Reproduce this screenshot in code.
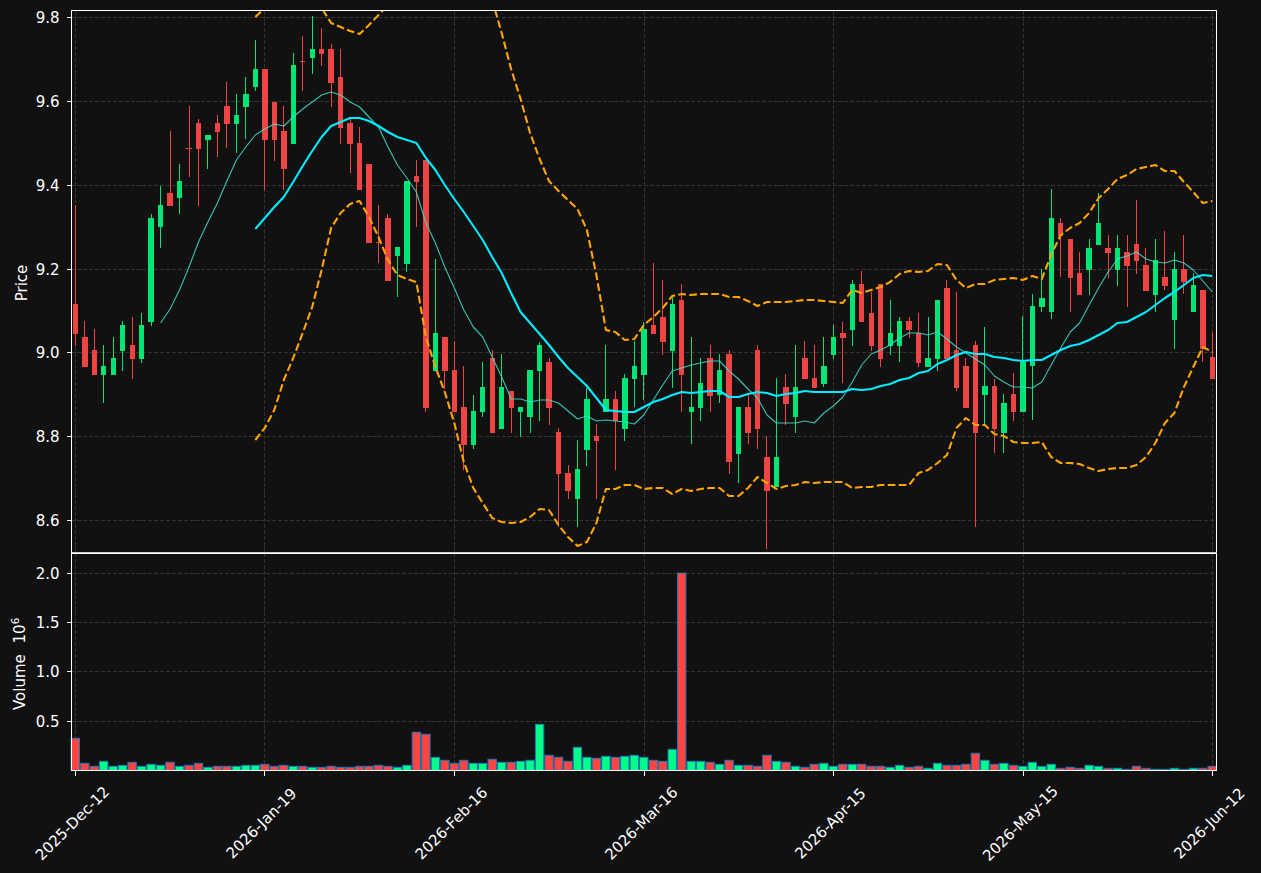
const LEFT = 71.5;
const RIGHT = 1216.5;
const TOP = 10.5;
const SPLIT = 553;
const BOTTOM = 770.5;

// candle spacing on the x axis, every 20th bar gets a date tick
const xAt = (i: number) => 75.3 + 9.475 * i;

// colour, wick top, body top, body bottom, wick bottom (all in px)
type Candle = ["r" | "g", number, number, number, number];

const candles: Candle[] = [
  ["r", 205, 304, 334, 346], ["r", 321, 337, 367, 367], ["r", 329, 350, 375, 375], ["g", 345, 366, 375, 403],
  ["g", 337, 358, 375, 375], ["g", 321, 325, 351, 371], ["r", 317, 345, 359, 379], ["g", 313, 325, 359, 363],
  ["g", 214, 218, 322, 326], ["g", 186, 205, 227, 248], ["r", 131, 193, 206, 206], ["g", 164, 181, 198, 214],
  ["r", 106, 148, 149, 177], ["r", 119, 123, 149, 206], ["g", 135, 135, 140, 169], ["r", 115, 123, 132, 157],
  ["r", 82, 106, 124, 148], ["g", 94, 115, 124, 153], ["g", 77, 94, 107, 139], ["g", 40, 69, 87, 91],
  ["r", 69, 69, 140, 190], ["r", 102, 102, 140, 161], ["r", 106, 131, 169, 190], ["g", 53, 65, 144, 144],
  ["r", 36, 61, 62, 91], ["g", 16, 49, 58, 74], ["r", 28, 49, 54, 66], ["r", 44, 49, 83, 107],
  ["r", 49, 77, 128, 144], ["r", 119, 123, 144, 173], ["r", 127, 143, 190, 190], ["r", 164, 164, 243, 243],
  ["r", 205, 242, 243, 263], ["r", 214, 218, 281, 281], ["g", 247, 247, 256, 297], ["g", 181, 181, 264, 272],
  ["r", 160, 176, 182, 227], ["r", 160, 160, 408, 412], ["g", 259, 333, 371, 371], ["r", 337, 337, 371, 389],
  ["r", 341, 370, 412, 412], ["r", 366, 407, 445, 470], ["g", 395, 411, 445, 449], ["g", 362, 387, 412, 417],
  ["r", 350, 358, 433, 433], ["g", 354, 387, 429, 429], ["r", 391, 391, 408, 433], ["g", 407, 407, 412, 437],
  ["g", 370, 370, 417, 433], ["g", 342, 345, 371, 421], ["r", 358, 362, 408, 425], ["r", 428, 432, 474, 527],
  ["r", 465, 473, 491, 499], ["g", 440, 469, 499, 527], ["g", 388, 399, 450, 466], ["r", 424, 436, 441, 499],
  ["g", 345, 399, 412, 412], ["r", 391, 399, 421, 470], ["g", 374, 378, 429, 441], ["g", 341, 366, 379, 407],
  ["g", 322, 329, 375, 400], ["r", 263, 325, 334, 334], ["r", 280, 317, 342, 355], ["g", 297, 304, 351, 388],
  ["r", 284, 300, 375, 412], ["g", 337, 407, 412, 444], ["g", 358, 383, 408, 421], ["r", 345, 358, 396, 412],
  ["g", 354, 370, 395, 403], ["r", 350, 354, 462, 474], ["g", 407, 407, 454, 483], ["r", 395, 407, 433, 444],
  ["r", 345, 350, 429, 449], ["r", 436, 457, 491, 549], ["g", 378, 457, 487, 487], ["r", 374, 387, 404, 425],
  ["g", 345, 387, 417, 433], ["r", 341, 358, 379, 379], ["r", 345, 378, 388, 388], ["g", 337, 366, 384, 387],
  ["g", 325, 337, 355, 359], ["r", 322, 333, 338, 383], ["g", 280, 284, 330, 346], ["r", 271, 284, 322, 322],
  ["r", 292, 313, 346, 351], ["r", 284, 284, 359, 367], ["g", 300, 333, 346, 355], ["g", 317, 321, 346, 362],
  ["r", 317, 321, 330, 338], ["r", 313, 333, 363, 367], ["g", 317, 358, 367, 367], ["g", 300, 300, 359, 371],
  ["r", 280, 288, 359, 359], ["r", 292, 350, 388, 391], ["r", 358, 366, 408, 408], ["r", 341, 345, 433, 527],
  ["g", 327, 386, 395, 425], ["r", 379, 386, 429, 453], ["g", 394, 403, 433, 453], ["r", 373, 394, 412, 421],
  ["g", 316, 362, 412, 412], ["g", 294, 306, 366, 420], ["g", 269, 298, 307, 312], ["g", 189, 218, 312, 319],
  ["r", 218, 223, 236, 277], ["r", 239, 239, 278, 312], ["r", 252, 273, 295, 295], ["g", 239, 248, 270, 295],
  ["g", 193, 223, 245, 245], ["r", 235, 248, 253, 278], ["g", 235, 248, 270, 286], ["r", 235, 252, 266, 307],
  ["r", 200, 244, 261, 274], ["r", 248, 265, 291, 291], ["g", 239, 260, 295, 312], ["r", 231, 277, 286, 290],
  ["g", 252, 269, 320, 349], ["r", 235, 269, 282, 294], ["g", 273, 285, 312, 312], ["r", 290, 290, 349, 362],
  ["r", 332, 357, 379, 379],
];

// top of each volume bar in px
const volumeTops = [
  738.3, 763.3, 766.3, 761.3, 766.3, 765.3, 762.3, 766.3, 764.3, 765.3, 762.3, 766.3, 765.3, 763.3, 767.3, 766.3,
  766.3, 766.3, 765.3, 765.3, 764.3, 766.3, 765.3, 766.3, 766.3, 767.3, 767.3, 766.3, 767.3, 767.3, 766.3, 766.3,
  765.3, 766.3, 767.3, 765.3, 732.3, 734.3, 757.3, 760.3, 763.3, 760.3, 763.3, 763.3, 759.3, 762.3, 762.3, 761.3,
  760.3, 724.3, 755.3, 757.3, 761.3, 747.3, 757.3, 758.3, 756.3, 757.3, 756.3, 755.3, 757.3, 760.3, 761.3, 749.3,
  573, 761.3, 761.3, 762.3, 764.3, 760.3, 765.3, 765.3, 766.3, 755.3, 761.3, 762.3, 766.3, 767.3, 764.3, 763.3,
  766.3, 764.3, 764.3, 764.3, 766.3, 766.3, 767.3, 765.3, 767.3, 766.3, 768.3, 763.3, 765.3, 765.3, 764.3, 753.3,
  760.3, 764.3, 763.3, 765.3, 766.3, 762.3, 766.3, 764.3, 768.3, 767.3, 768.3, 765.3, 766.3, 768.3, 768.3, 769.3,
  766.3, 768.3, 769.3, 769.3, 768.3, 769.3, 768.3, 768.3, 766.3,
];

// thin moving average, starts at bar 9
const maFast = [
  323, 309, 290, 267, 242, 222, 203, 181, 160, 147, 135, 129, 124, 126, 117, 109, 102, 95, 92, 95, 102, 107, 117, 127,
  147, 165, 178, 192, 223, 243, 267, 288, 310, 327, 337, 357, 377, 399, 399, 402, 400, 400, 403, 411, 419, 416, 421,
  420, 421, 422, 424, 415, 400, 385, 371, 368, 365, 363, 361, 361, 371, 379, 389, 398, 415, 423, 423, 423, 421, 423,
  413, 406, 397, 382, 365, 354, 350, 345, 338, 333, 333, 335, 332, 339, 347, 353, 359, 365, 376, 382, 387, 387, 388,
  382, 365, 348, 332, 323, 305, 288, 272, 259, 256, 252, 259, 262, 263, 260, 263, 270, 281, 292,
];

// the rest start at bar 19
const maSlow = [
  229, 218, 207, 197, 182, 166, 151, 137, 126, 122, 118, 118, 121, 126, 132, 137, 140, 143, 158, 170, 185, 199, 212,
  226, 240, 257, 273, 293, 312, 323, 334, 345, 357, 368, 377, 386, 398, 410, 411, 412, 412, 407, 402, 399, 395, 392,
  393, 392, 391, 391, 397, 397, 394, 392, 393, 396, 394, 393, 391, 392, 392, 392, 392, 389, 390, 389, 386, 384, 380,
  378, 373, 371, 364, 360, 355, 352, 354, 354, 357, 358, 360, 361, 360, 360, 355, 350, 346, 344, 340, 335, 330, 323,
  322, 317, 312, 305, 298, 292, 285, 278, 275, 276,
];

const bandUpper = [
  17, 8, 6, 10, 3, -8, -6, 8, 23, 27, 31, 34, 25, 15, 5, -10, -25, -40, -50, -60, -60, -50, -40, -25, -12, 0, 33, 69,
  99, 133, 159, 181, 191, 200, 209, 230, 275, 330, 332, 340, 339, 325, 317, 308, 296, 294, 295, 294, 294, 294, 297,
  297, 301, 306, 302, 302, 302, 301, 300, 300, 301, 302, 303, 290, 293, 290, 287, 282, 274, 271, 272, 271, 264, 265,
  280, 288, 284, 284, 280, 279, 278, 280, 276, 279, 255, 235, 228, 223, 213, 198, 189, 179, 175, 169, 167, 165, 171,
  171, 182, 192, 203, 201,
];

const bandLower = [
  440, 428, 410, 380, 358, 333, 307, 270, 228, 213, 204, 201, 217, 237, 260, 275, 279, 282, 337, 367, 392, 423, 462,
  488, 503, 518, 522, 523, 522, 517, 509, 510, 525, 537, 546, 542, 523, 489, 489, 485, 485, 489, 488, 488, 494, 489,
  491, 489, 488, 488, 496, 496, 488, 477, 483, 489, 486, 485, 482, 483, 482, 482, 482, 488, 487, 487, 485, 485, 485,
  485, 473, 470, 463, 455, 428, 418, 425, 425, 434, 436, 442, 443, 443, 442, 457, 463, 463, 464, 468, 471, 469, 468,
  468, 465, 457, 443, 423, 413, 387, 367, 347, 352,
];

const priceTicks = [
  ["9.8", 17.5], ["9.6", 101.5], ["9.4", 185.5], ["9.2", 269.5], ["9.0", 352.5], ["8.8", 436.5], ["8.6", 520.5],
] as const;
const volumeTicks = [
  ["2.0", 573.5], ["1.5", 622.5], ["1.0", 671.5], ["0.5", 721.5],
] as const;
const dateTicks = [
  ["2025-Dec-12", 75.5], ["2026-Jan-19", 264.5], ["2026-Feb-16", 454.5], ["2026-Mar-16", 644.5],
  ["2026-Apr-15", 833.5], ["2026-May-15", 1023.5], ["2026-Jun-12", 1212.5],
] as const;

const toPoints = (ys: number[], start: number) => ys.map((y, k) => `${xAt(start + k).toFixed(1)},${y}`).join(" ");

export default function App() {
  return (
    <div className="h-[873px] w-full overflow-hidden bg-[#111111]">
      <svg width={1261} height={873} className="block fill-white font-['DejaVu_Sans',sans-serif] text-[15px]">
        <defs>
          <clipPath id="price-area">
            <rect x={72} y={11} width={1144} height={541} />
          </clipPath>
        </defs>

        {/* Grid */}
        <g stroke="#333333" strokeWidth={1} strokeDasharray="4.1 1.8" shapeRendering="crispEdges">
          {[...priceTicks, ...volumeTicks].map(([label, y]) => (
            <line key={label + y} x1={LEFT} x2={RIGHT} y1={y} y2={y} />
          ))}
          {dateTicks.map(([label, x]) => (
            <line key={label} x1={x} x2={x} y1={TOP} y2={BOTTOM} />
          ))}
        </g>

        {/* Candles */}
        <g shapeRendering="crispEdges">
          {candles.map(([color, wickTop, bodyTop, bodyBottom, wickBottom], i) => {
            const x = xAt(i);
            const fill = color === "g" ? "#00e676" : "#ef4444";
            return (
              <g key={i} fill={fill}>
                <rect x={Math.floor(x)} y={wickTop} width={1} height={wickBottom - wickTop} />
                <rect x={x - 2.65} y={bodyTop} width={5.4} height={Math.max(bodyBottom - bodyTop, 1)} />
              </g>
            );
          })}
        </g>

        {/* Moving averages and bands */}
        <g clipPath="url(#price-area)" fill="none" strokeLinejoin="round">
          <polyline points={toPoints(bandUpper, 19)} stroke="#ffa500" strokeWidth={2.1} strokeDasharray="7.7 3.3" />
          <polyline points={toPoints(bandLower, 19)} stroke="#ffa500" strokeWidth={2.1} strokeDasharray="7.7 3.3" />
          <polyline points={toPoints(maFast, 9)} stroke="#40e0d0" strokeOpacity={0.85} strokeWidth={1.1} />
          <polyline points={toPoints(maSlow, 19)} stroke="#00eeff" strokeWidth={2.1} />
        </g>

        {/* Volume */}
        <g stroke="#1f77b4" strokeWidth={1}>
          {volumeTops.map((top, i) => (
            <rect
              key={i}
              x={xAt(i) - 4.2}
              y={top}
              width={8.4}
              height={BOTTOM - top}
              fill={candles[i][0] === "g" ? "#00ff88" : "#ff4444"}
            />
          ))}
        </g>

        {/* Frame and ticks */}
        <g stroke="#ffffff" strokeWidth={1.1} fill="none" shapeRendering="crispEdges">
          <rect x={LEFT} y={TOP} width={RIGHT - LEFT} height={BOTTOM - TOP} />
          <line x1={LEFT} x2={RIGHT} y1={SPLIT - 0.5} y2={SPLIT - 0.5} stroke="#cccccc" />
          <line x1={LEFT} x2={RIGHT} y1={SPLIT + 0.5} y2={SPLIT + 0.5} />
          {[...priceTicks, ...volumeTicks].map(([label, y]) => (
            <line key={label + y} x1={66.5} x2={LEFT} y1={y} y2={y} />
          ))}
          {dateTicks.map(([label, x]) => (
            <line key={label} x1={x} x2={x} y1={BOTTOM} y2={BOTTOM + 5} />
          ))}
        </g>

        {/* Labels */}
        {[...priceTicks, ...volumeTicks].map(([label, y]) => (
          <text key={label + y} x={59.5} y={y + 5.5} textAnchor="end">
            {label}
          </text>
        ))}
        {dateTicks.map(([label, x]) => (
          <text key={label} textAnchor="middle" transform={`translate(${x + 0.5} 827) rotate(-45)`}>
            {label}
          </text>
        ))}
        <text textAnchor="middle" transform="translate(27 283) rotate(-90)">
          Price
        </text>
        <text transform="translate(25 710) rotate(-90)">
          Volume{"  "}
          <tspan dx={6}>10</tspan>
          <tspan dy={-6} className="text-[10.5px]">
            6
          </tspan>
        </text>
      </svg>
    </div>
  );
}
